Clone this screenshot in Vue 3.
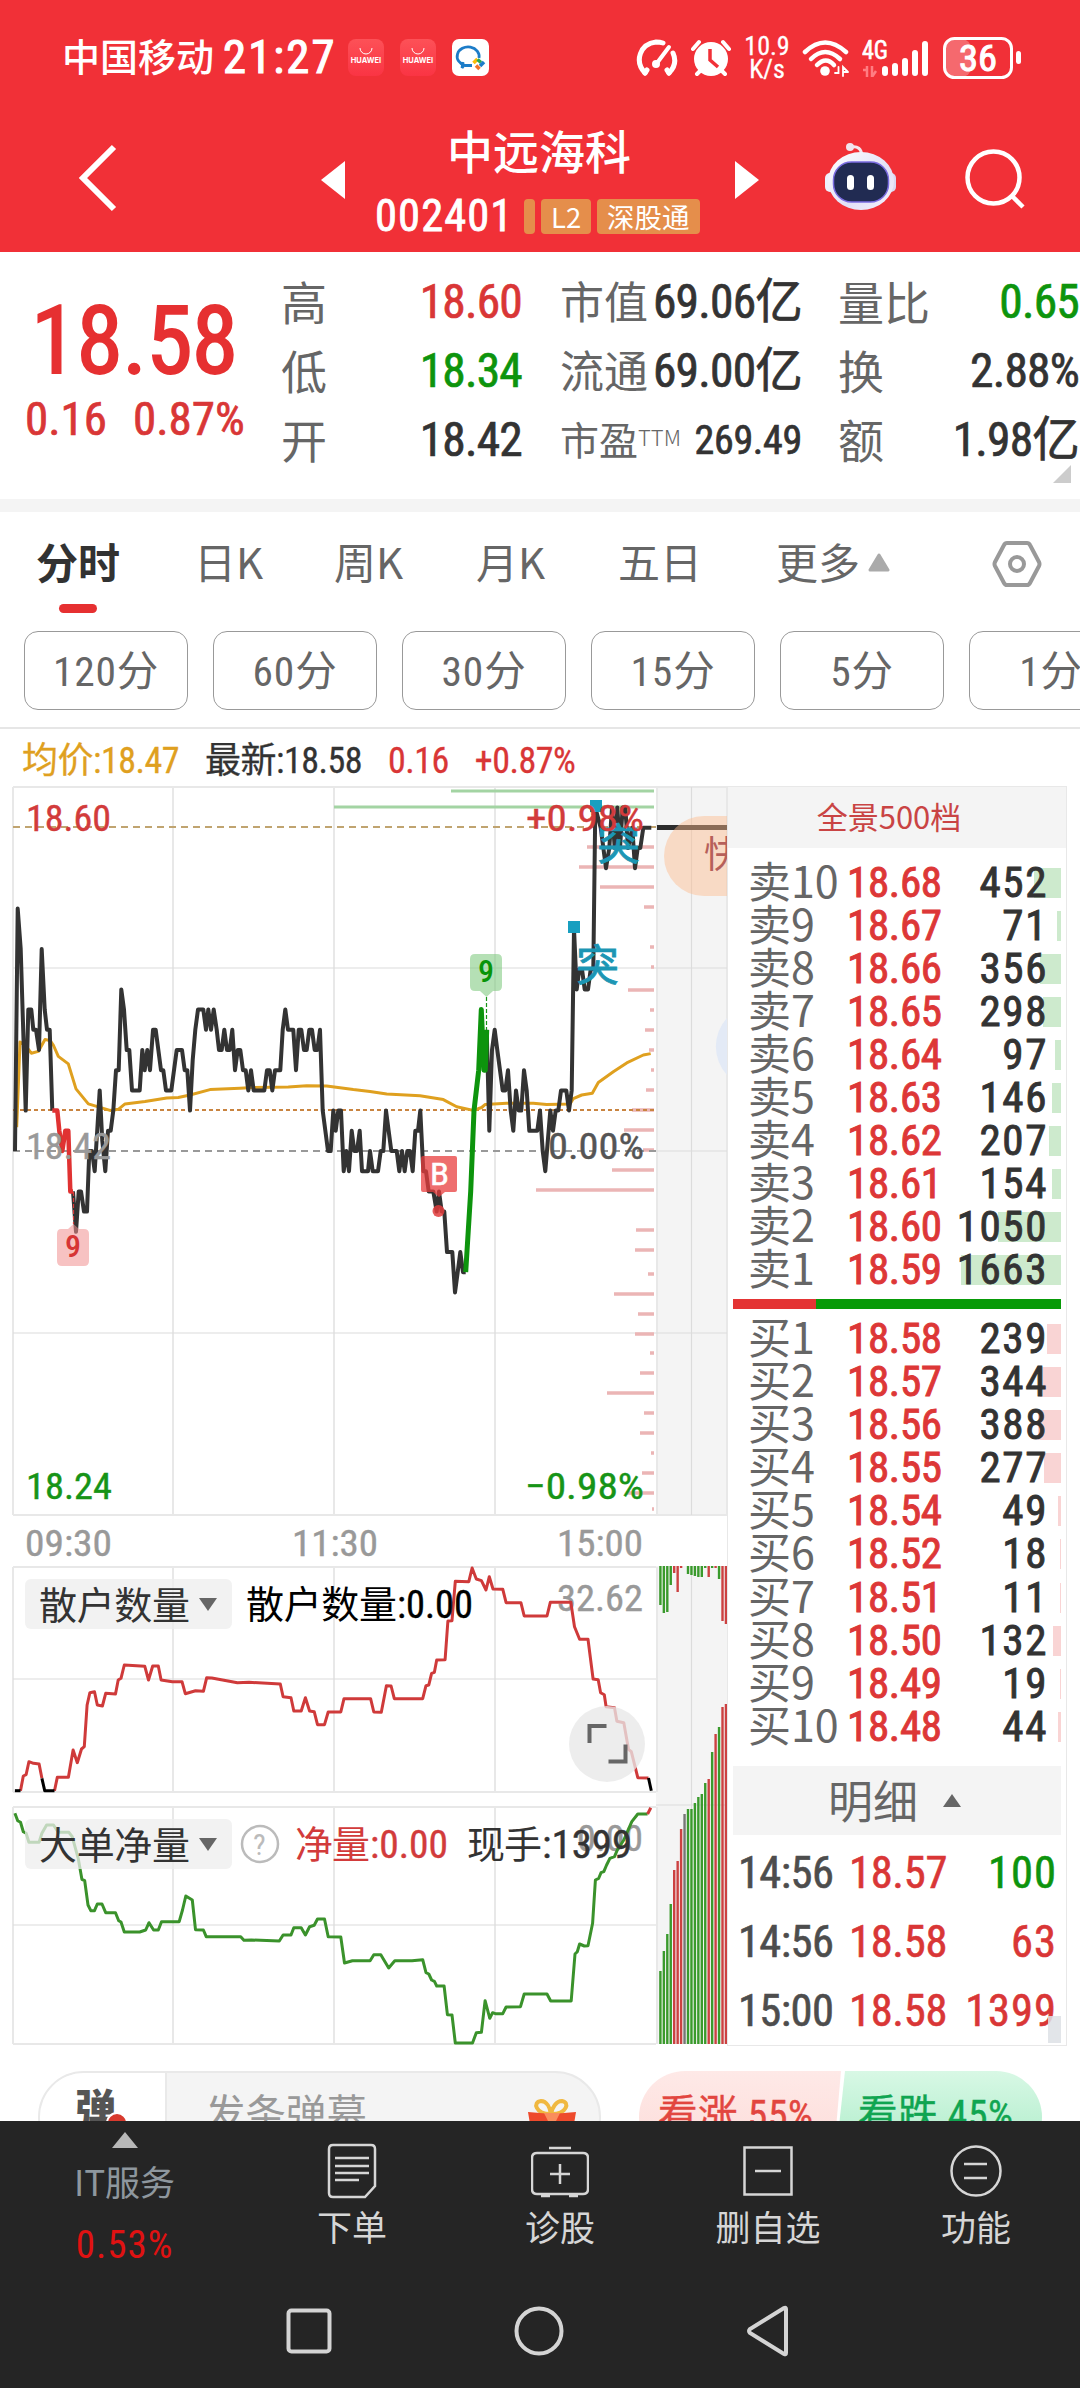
<template>
  <div class="phone">
    <header class="header">
      <div class="status">
        <span class="carrier">中国移动</span>
        <span class="clock">21:27</span>
        <span v-for="n in 2" :key="n" class="store">
          <svg width="36" height="14" viewBox="0 0 36 14"><path d="M12 6a6 6 0 0 0 12 0" fill="none" stroke="#fff" stroke-width="1" /></svg>
          HUAWEI
        </span>
        <svg class="wecom" width="37" height="37" viewBox="0 0 37 37">
          <rect width="37" height="37" rx="7" fill="#fff" />
          <path d="M27 19a11 9.500 0 1 0-14 7.500h7M13 25l-3 4 1-6" fill="none" stroke="#1c7cc8" stroke-width="2.800" />
          <path d="M21.500 24l4-4" stroke="#fbbc05" stroke-width="3.500" />
          <path d="M25.500 20.500l3.500 3" stroke="#2fa84f" stroke-width="3.500" />
          <path d="M28 27l4-4" stroke="#1c7cc8" stroke-width="3.500" />
          <path d="M24 26.500l3.500 3.500" stroke="#f0722a" stroke-width="3.500" />
        </svg>
        <div class="spacer"></div>
        <svg width="42" height="38" viewBox="0 0 42 38" fill="none" stroke="#fff" stroke-width="5" stroke-linecap="round">
          <path d="M9 34C-2 22 4 5 20 3q4 0 7 1" />
          <path d="M37 14q5 11-4 20" />
          <path d="M9 34l2-3M33 34l-2-3" />
          <path d="M21 24L33 8" stroke-width="4" />
          <circle cx="20" cy="25" r="2.500" fill="#fff" stroke-width="3" />
        </svg>
        <svg class="alarm" width="40" height="38" viewBox="0 0 40 38">
          <circle cx="20" cy="20" r="17" fill="#fff" />
          <path d="M2 10l6-7M38 10l-6-7M6 35l5-5M34 35l-5-5" stroke="#fff" stroke-width="4" stroke-linecap="round" />
          <path d="M19 10v11l8 7" fill="none" stroke="#f13037" stroke-width="3.500" />
        </svg>
        <div class="speed"><span>10.9</span><span>K/s</span></div>
        <svg class="wifi" width="48" height="38" viewBox="0 0 48 38" fill="none" stroke="#fff" stroke-width="4.500" stroke-linecap="round">
          <path d="M3 13q20-19 41 0" />
          <path d="M9 20q14-14 29 0" />
          <path d="M15 26q9-9 17 0" />
          <circle cx="23" cy="32" r="4.800" fill="#fff" stroke="none" />
          <path d="M33 33h3.500v-6M45 32h-4v-5M41 36v-9l5 5" stroke-width="1.800" transform="translate(0 1)" />
        </svg>
        <svg class="signal" width="68" height="38" viewBox="0 0 68 38">
          <text x="0" y="20" font-size="25" textLength="26" lengthAdjust="spacingAndGlyphs" fill="#fff" stroke="#fff" stroke-width=".6">4G</text>
          <path d="M1 31h4v-4M5 27v11M10 27v11l4-6" stroke="#ff7d82" stroke-width="2.500" fill="none" />
          <g stroke="#fff" stroke-width="6" stroke-linecap="round">
            <path d="M23 30v4M33 27v7M43 22v12M53 14v20M63 5v29" />
          </g>
        </svg>
        <svg class="battery" width="79" height="42" viewBox="0 0 79 42">
          <rect x="2" y="2" width="26" height="38" rx="9" fill="#f5696e" />
          <rect x="1.500" y="1.500" width="67" height="39" rx="10" fill="none" stroke="#fff" stroke-width="3" />
          <rect x="73" y="14" width="5" height="13" rx="2.500" fill="#fff" />
          <text x="16" y="33.500" font-size="36" fill="#fff" stroke="#fff" stroke-width="1" textLength="38" lengthAdjust="spacingAndGlyphs">36</text>
        </svg>
      </div>

      <div class="nav">
        <svg class="back" width="40" height="68" viewBox="0 0 40 68"><path d="M36 3L5 34l31 31" fill="none" stroke="#fff" stroke-width="6" /></svg>
        <svg class="prev" width="24" height="38" viewBox="0 0 24 38"><path d="M24 0v38L0 19z" fill="#fff" /></svg>
        <div class="stock">
          <div class="stock-name">中远海科</div>
          <div class="stock-line">
            <span class="stock-code">002401</span>
            <i class="tag cut"></i>
            <span class="tag l2">L2</span>
            <span class="tag">深股通</span>
          </div>
        </div>
        <svg class="next" width="24" height="38" viewBox="0 0 24 38"><path d="M0 0v38l24-19z" fill="#fff" /></svg>
        <svg class="robot" width="74" height="70" viewBox="0 0 74 70">
          <defs>
            <linearGradient id="shell" x1="0" y1="0" x2="1" y2="1">
              <stop offset="0" stop-color="#fff" />
              <stop offset=".6" stop-color="#e2e0f6" />
              <stop offset="1" stop-color="#f6f2fd" />
            </linearGradient>
          </defs>
          <path d="M27 5q10-2 11 9" fill="none" stroke="#f4e6ee" stroke-width="3" />
          <circle cx="26" cy="5" r="4" fill="#f1e4ee" />
          <rect x="1" y="31" width="10" height="19" rx="5" fill="#eef0fc" />
          <rect x="62" y="31" width="10" height="19" rx="5" fill="#dbd9f2" />
          <ellipse cx="37" cy="39" rx="33" ry="29" fill="url(#shell)" />
          <rect x="9.500" y="20" width="55" height="40" rx="18" fill="#212b52" stroke="#7a6be0" stroke-width="1.500" />
          <rect x="23" y="33" width="7" height="15" rx="3.500" fill="#fff" />
          <rect x="43" y="33" width="7" height="15" rx="3.500" fill="#fff" />
        </svg>
        <svg class="search" width="60" height="60" viewBox="0 0 60 60" fill="none" stroke="#fff" stroke-width="4.500">
          <circle cx="28.500" cy="28.500" r="26" />
          <path d="M47 47l11 11" />
        </svg>
      </div>
    </header>

    <section class="quote">
      <div class="now red">
        <div class="now-price">18.58</div>
        <div class="now-diff"><span>0.16</span><span>0.87%</span></div>
      </div>
      <dl v-for="(col, i) in quoteCols" :key="i" :class="'col col' + i">
        <div v-for="q in col" :key="q.label" :class="['pair', { small: q.sup }]">
          <dt>{{ q.label }}<sup v-if="q.sup">{{ q.sup }}</sup></dt>
          <dd :class="q.tone">{{ q.value }}</dd>
        </div>
      </dl>
      <i class="corner"></i>
    </section>

    <nav class="tabs">
      <span v-for="t in tabs" :key="t" :class="['tab', { active: t === '分时' }]">{{ t }}</span>
      <span class="tab more">更多<svg width="24" height="20" viewBox="0 0 24 20"><path d="M12 2l9 15H3z" fill="#aaa" stroke="#aaa" stroke-width="3" stroke-linejoin="round" /></svg></span>
      <svg class="gear" width="50" height="48" viewBox="0 0 50 48" fill="none" stroke="#999" stroke-width="4">
        <path d="M15 3h20q2 0 3 2l9 17q1 2 0 4l-9 17q-1 2-3 2H15q-2 0-3-2L3 26q-1-2 0-4l9-17q1-2 3-2z" />
        <circle cx="25" cy="24" r="7" />
      </svg>
    </nav>

    <div class="periods">
      <span v-for="p in periods" :key="p" class="period">{{ p }}</span>
    </div>

    <div class="summary">
      <span class="gold">均价:18.47</span>
      <span>最新:18.58</span>
      <span class="red">0.16</span>
      <span class="red">+0.87%</span>
    </div>

    <main class="board">
      <svg class="chart" width="716" height="1260" viewBox="12 786 716 1260">
        <!-- side strip -->
        <g fill="#f4f4f4">
          <rect x="656" y="787" width="71" height="728" />
          <rect x="656" y="1566" width="71" height="478" />
        </g>
        <!-- grid -->
        <g stroke="#e8e8e8" stroke-width="2" fill="none">
          <path d="M13 787H727M13 1515H727V787M13 1567H656M13 1792H656M13 1807H656M656 1805H727M13 2044H656" />
          <path v-for="x in [13, 173, 334, 495, 657]" :key="x" :d="`M${x} 787V1515M${x} 1567V1792M${x} 1807V2044`" />
        </g>
        <path d="M13 968H727M13 1333H727M656 1151H727M13 1679H656M13 1925H656M691.500 787V1515M691.500 1566V2044" stroke="#dcdcdc" stroke-width="1.200" fill="none" />

        <!-- chip distribution -->
        <path d="M451 791H654M334 807H654" stroke="#a3d4a3" stroke-width="3" />
        <path v-for="[x, y] in chips" :key="y" :d="`M${x} ${y}H654`" stroke="#ebb5b5" stroke-width="3.500" />

        <g fill="none" stroke-width="2">
          <path d="M13 827H656" stroke="#c0a470" stroke-dasharray="7 5" />
          <path d="M13 1151H656" stroke="#999" stroke-dasharray="7 5" />
          <path d="M13 1110H656" stroke="#c98440" stroke-dasharray="4 3" />
        </g>

        <g fill="none" stroke-linejoin="round">
          <polyline :points="average" stroke="#dfa01f" stroke-width="3" />
          <polyline v-for="(s, i) in price" :key="i" :points="s.points" :stroke="s.color" :stroke-width="s.width" />
          <path d="M657 827.500H727" stroke="#2c2c2c" stroke-width="5" />
          <path d="M73.500 1192V1224" stroke="#d43a3a" stroke-width="1.200" stroke-dasharray="4 2" />
          <path d="M486.500 997V1030" stroke="#179417" stroke-width="1.200" stroke-dasharray="4 2" />
        </g>

        <!-- signals -->
        <path d="M61 1229h7l5.500-5 5.500 5h5q5 0 5 5v27q0 5-5 5H62q-5 0-5-5v-27q0-5 4-5z" fill="#f08f8f" fill-opacity=".55" />
        <text x="65" y="1257" class="mark" fill="#d63535">9</text>
        <path d="M475 954h22q5 0 5 5v27q0 5-5 5h-4l-6.500 6-6.500-6h-5q-5 0-5-5v-27q0-5 5-5z" fill="#7cc87c" fill-opacity=".57" />
        <text x="478" y="982" class="mark" fill="#089408">9</text>
        <circle cx="438.500" cy="1211" r="6" fill="#e23c3c" fill-opacity=".85" />
        <path d="M423 1156h32q2 0 2 2v32q0 2-2 2h-10l-6 5-6-5h-10q-2 0-2-2v-32q0-2 2-2z" fill="#e83d3d" fill-opacity=".75" />
        <text x="430" y="1185" font-size="31" textLength="19" lengthAdjust="spacingAndGlyphs" fill="#fff" stroke="#fff" stroke-width=".5">B</text>
        <rect x="568" y="921" width="12" height="12" fill="#189fc0" />
        <rect x="590" y="800" width="12" height="12" fill="#189fc0" />
        <text x="576" y="981" class="burst">突</text>
        <text x="597" y="860" class="burst">突</text>

        <path d="M727 816h-23a40 40 0 0 0 0 80h23z" fill="#fdba8c" fill-opacity=".45" />
        <text x="704" y="868" font-size="37" fill="#b6605a">快</text>
        <path d="M727 1018a42 42 0 0 0 0 57z" fill="#e3eaf6" />

        <g class="axis">
          <text v-for="a in axis" :key="a.text + a.y" :x="a.x" :y="a.y" :textLength="a.w" lengthAdjust="spacingAndGlyphs" :fill="a.fill" :stroke="a.fill">{{ a.text }}</text>
        </g>

        <!-- indicators -->
        <g fill="none" stroke-width="3" stroke-linejoin="round">
          <polyline v-for="(s, i) in retail" :key="i" :points="s.points" :stroke="s.color" />
          <polyline v-for="(s, i) in netFlow" :key="'n' + i" :points="s.points" :stroke="s.color" />
        </g>
        <g v-for="(b, i) in strip" :key="i" :fill="b.color">
          <rect :x="659.2 + i * 3.45" y="1566" width="2.400" :height="b.top" />
          <rect :x="659.2 + i * 3.45" :y="2044 - b.bottom" width="2.400" :height="b.bottom" />
        </g>

        <g class="legend">
          <rect x="25" y="1579" width="207" height="50" rx="6" fill="#ededed" fill-opacity=".75" />
          <text x="39" y="1619" textLength="151" fill="#333">散户数量</text>
          <path d="M199 1598h18l-9 13z" fill="#666" />
          <text x="246" y="1618" textLength="151" fill="#000">散户数量</text>
          <text x="397" y="1618" textLength="76" fill="#000" stroke="#000" lengthAdjust="spacingAndGlyphs">:0.00</text>

          <rect x="25" y="1819" width="207" height="50" rx="6" fill="#ededed" fill-opacity=".75" />
          <text x="39" y="1859" textLength="151" fill="#333">大单净量</text>
          <path d="M199 1838h18l-9 13z" fill="#666" />
          <circle cx="260" cy="1844" r="18" fill="none" stroke="#bbb" stroke-width="2.500" />
          <text x="253" y="1855" class="ask">?</text>
          <text x="295" y="1858" textLength="75" fill="#d23b3b">净量</text>
          <text x="370" y="1858" textLength="78" fill="#d23b3b" stroke="#d23b3b" lengthAdjust="spacingAndGlyphs">:0.00</text>
          <text x="467" y="1858" textLength="75" fill="#333">现手</text>
          <text x="542" y="1858" textLength="90" fill="#333" stroke="#333" lengthAdjust="spacingAndGlyphs">:1399</text>
        </g>

        <circle cx="607" cy="1744" r="38" fill="#e8e8e8" fill-opacity=".78" />
        <path d="M589.500 1743v-17h17M608.500 1761.500h17v-17" fill="none" stroke="#666" stroke-width="4" />
      </svg>

      <aside class="book">
        <div class="book-head">全景500档</div>
        <div class="levels asks">
          <div v-for="(r, i) in asks" :key="i" class="level">
            <span class="lv-name">卖{{ 10 - i }}</span>
            <span class="lv-price">{{ r[0] }}</span>
            <span class="lv-vol">{{ r[1] }}</span>
            <i class="lv-bar" :style="{ width: r[1] * 0.06 + 'px' }"></i>
          </div>
        </div>
        <div class="ratio"><i></i></div>
        <div class="levels bids">
          <div v-for="(r, i) in bids" :key="i" class="level">
            <span class="lv-name">买{{ i + 1 }}</span>
            <span class="lv-price">{{ r[0] }}</span>
            <span class="lv-vol">{{ r[1] }}</span>
            <i class="lv-bar" :style="{ width: r[1] * 0.06 + 'px' }"></i>
          </div>
        </div>
        <div class="detail-head"><span>明细</span><svg width="18" height="13" viewBox="0 0 18 13"><path d="M9 0l9 13H0z" fill="#666" /></svg></div>
        <div v-for="(d, i) in deals" :key="i" class="deal">
          <span class="deal-time">{{ d.time }}</span>
          <span class="deal-price">{{ d.price }}</span>
          <span :class="['deal-vol', d.tone]">{{ d.vol }}</span>
        </div>
        <i class="thumb"></i>
      </aside>
    </main>

    <div class="social">
      <div class="danmu">
        <div class="danmu-icon">弹<i></i></div>
        <span class="danmu-input">发条弹幕</span>
        <svg width="52" height="48" viewBox="0 0 48 48">
          <path d="M22 16C8 16 4 4 13 3c6 0 9 7 10 13 1-6 5-13 11-13 8 1 5 13-10 13" fill="none" stroke="#f0b840" stroke-width="4" />
          <path d="M0 14l24 2 24-2-2 12-22 3-22-3z" fill="#ee4a2c" />
          <path d="M3 26l21 3 21-3v18H3z" fill="#d92b1c" />
          <path d="M16 15h16l-4 8h-8z" fill="#fa8d5c" />
        </svg>
      </div>
      <div class="vote">
        <span class="up">看涨 55%</span>
        <span class="down">看跌 45%</span>
      </div>
    </div>

    <footer class="footer">
      <div class="actions">
        <div class="sector">
          <svg width="26" height="16" viewBox="0 0 26 16"><path d="M13 0l13 16H0z" fill="#b8b8b8" /></svg>
          <span>IT服务</span>
          <b>0.53%</b>
        </div>
        <div class="action">
          <svg width="50" height="56" viewBox="0 0 50 56"><path d="M6 2h38q4 0 4 4v37L38 54H6q-4 0-4-4V6q0-4 4-4zM8 15h34M8 23h34M8 30h34M8 37h24" /></svg>
          <span>下单</span>
        </div>
        <div class="action">
          <svg width="58" height="56" viewBox="0 0 58 56"><path d="M6 10h46q5 0 5 5v31q0 5-5 5H6q-5 0-5-5V15q0-5 5-5zM18 5h22M29 21v20M19 31h20M10 53h9M38 53h9" /></svg>
          <span>诊股</span>
        </div>
        <div class="action">
          <svg width="50" height="56" viewBox="0 0 50 56"><path d="M1.500 4.500h47v47h-47zM12 28h26" /></svg>
          <span>删自选</span>
        </div>
        <div class="action">
          <svg width="52" height="56" viewBox="0 0 52 56"><path d="M14 21h23M14 35h23" /><circle cx="26" cy="28" r="24.500" /></svg>
          <span>功能</span>
        </div>
      </div>
      <div class="system">
        <svg width="46" height="50" viewBox="0 0 46 50"><rect x="2.500" y="4.500" width="41" height="41" rx="3" /></svg>
        <svg width="50" height="50" viewBox="0 0 50 50"><circle cx="25" cy="25" r="22.500" /></svg>
        <svg width="44" height="52" viewBox="0 0 44 52"><path d="M40 4v44q0 2-2 1L4 28q-2-2 0-4L38 3q2-1 2 1z" /></svg>
      </div>
    </footer>
  </div>
</template>

<script setup>
const quoteCols = [
  [
    { label: '高', value: '18.60', tone: 'red' },
    { label: '低', value: '18.34', tone: 'green' },
    { label: '开', value: '18.42' }
  ],
  [
    { label: '市值', value: '69.06亿' },
    { label: '流通', value: '69.00亿' },
    { label: '市盈', sup: 'TTM', value: '269.49' }
  ],
  [
    { label: '量比', value: '0.65', tone: 'green' },
    { label: '换', value: '2.88%' },
    { label: '额', value: '1.98亿' }
  ]
];

const tabs = ['分时', '日K', '周K', '月K', '五日'];
const periods = ['120分', '60分', '30分', '15分', '5分', '1分'];

const asks = [
  ['18.68', 452], ['18.67', 71], ['18.66', 356], ['18.65', 298], ['18.64', 97],
  ['18.63', 146], ['18.62', 207], ['18.61', 154], ['18.60', 1050], ['18.59', 1663]
];
const bids = [
  ['18.58', 239], ['18.57', 344], ['18.56', 388], ['18.55', 277], ['18.54', 49],
  ['18.52', 18], ['18.51', 11], ['18.50', 132], ['18.49', 19], ['18.48', 44]
];
const deals = [
  { time: '14:56', price: '18.57', vol: 100, tone: 'green' },
  { time: '14:56', price: '18.58', vol: 63, tone: 'red' },
  { time: '15:00', price: '18.58', vol: 1399, tone: 'red' }
];

const axis = [
  { text: '18.60', x: 26, y: 831, w: 85, fill: '#d23b3b' },
  { text: '+0.98%', x: 526, y: 831, w: 118, fill: '#d23b3b' },
  { text: '18.42', x: 26, y: 1159, w: 85, fill: '#999' },
  { text: '0.00%', x: 548, y: 1159, w: 96, fill: '#555' },
  { text: '18.24', x: 26, y: 1499, w: 86, fill: '#179417' },
  { text: '−0.98%', x: 525, y: 1499, w: 119, fill: '#179417' },
  { text: '09:30', x: 25, y: 1556, w: 87, fill: '#999' },
  { text: '11:30', x: 292, y: 1556, w: 86, fill: '#999' },
  { text: '15:00', x: 557, y: 1556, w: 86, fill: '#999' },
  { text: '32.62', x: 557, y: 1611, w: 86, fill: '#999' },
  { text: '0.00', x: 577, y: 1851, w: 66, fill: '#999' }
];

// left end and height of every pink distribution bar
const chips = [
  [587, 847], [579, 867], [600, 887], [644, 907], [650, 947], [651, 967], [628, 990], [650, 1010],
  [645, 1030], [649, 1050], [651, 1070], [646, 1090], [632, 1110], [624, 1130], [643, 1150], [612, 1170],
  [536, 1190], [636, 1230], [635, 1250], [648, 1274], [614, 1294], [638, 1314], [635, 1334], [650, 1353],
  [640, 1373], [607, 1393], [644, 1413], [640, 1433], [651, 1453], [642, 1473], [626, 1493], [652, 1509]
];

const parse = (text) => text.trim().split(/\s+/).map((p) => p.split(',').map(Number));

// one tick is 0.01, counted from the previous close
const ticks = (text) => parse(text).map(([x, n]) => `${(x / 3).toFixed(1)},${(1151 - n * 20.2).toFixed(1)}`).join(' ');

const price = [
  {
    color: '#333', width: 4,
    points: ticks(`45,0 53,12 62,10 77,2 85,7 94,7 100,6 108,6 117,5 125,10 134,7 141,6 149,6 157,2`)
  },
  {
    color: '#333', width: 4,
    points: ticks(`219,-2 228,-4 236,-2 243,-2 252,-3 261,-3 268,0 276,0 284,-1 299,3 307,.5 316,-1 324,1 332,1 340,2
      348,4 356,4 364,8 372,7 380,5 388,5 396,3 419,3 427,5 434,4 442,5 450,4 459,6 467,6 483,4 490,4 498,3 514,3
      530,5 546,5 554,4 562,4 570,2 578,4.5 586,6 594,7 610,7 618,6 625,7 633,6 641,7 650,6 657,5 665,5 673,6 681,5
      689,5 697,6 705,4 713,5 721,5 729,4 737,4 745,3 753,4 761,3 793,3 801,4 809,4 817,3 825,4 841,4 848,6 856,7
      864,6 880,6 888,4 896,6 904,6 912,5 920,5 928,6 936,6 944,5 952,5 960,6 968,2 984,0 992,0 1000,2 1007,1
      1015,2 1023,2 1031,-1 1039,0 1047,-1 1055,1 1063,0 1071,0 1079,1 1086,-1
      1104,-1 1110,0 1118,-1 1134,-1 1142,0 1150,0 1158,2 1174,0 1190,0 1198,-1 1206,0 1214,-1 1222,0 1230,0
      1238,-1 1246,1 1254,1 1261,2 1270,-1 1278,-1 1286,-2 1300,-2 1310,-3 1317,-2 1325,-3 1333,-3 1341,-5
      1357,-5 1365,-7 1373,-6 1381,-5 1389,-6 1397,-6`)
  },
  {
    color: '#333', width: 4,
    points: ticks(`1460,6 1468,1 1476,5 1484,6 1492,5 1508,3 1516,3 1524,4 1532,2 1540,1 1548,3 1556,2 1564,2 1572,4
      1580,3 1588,1 1612,1 1620,2 1628,0 1636,-1 1651,2 1659,1 1667,2 1675,2 1683,3 1699,3 1707,2 1715,3 1722,11
      1730,8 1738,9 1746,9 1754,8 1764,8 1772,9 1780,9 1786,17 1802,16 1818,14 1828,15 1836,17 1844,15 1852,17
      1860,15 1868,17 1876,17 1884,15 1897,16 1905,14 1913,15 1921,15 1930,16 1954,16`)
  },
  { color: '#e03232', width: 4.5, points: ticks('157,2 172,2 178,1 187,0 196,1 205,1 211,-2 219,-2') },
  { color: '#0d940d', width: 5, points: ticks('1397,-6 1412,-2 1422,2 1436,4 1444,7 1452,4 1456,4 1460,6') }
];

const average = parse(`50,1000 60,762 75,770 94,793 115,788 135,755 150,757 160,770 175,802 205,823 228,893 265,935
  290,942 330,953 355,950 375,935 435,928 500,918 535,917 570,910 630,895 720,891 760,889 865,888 920,884 980,885
  1060,895 1110,900 1160,907 1260,912 1330,923 1370,943 1420,953 1445,945 1455,937 1520,933 1600,933 1640,937
  1710,935 1720,920 1745,910 1777,905 1795,875 1840,845 1880,820 1930,798 1952,794`)
  .map(([x, y]) => `${(x / 3).toFixed(1)},${(770 + y / 2.8).toFixed(1)}`).join(' ');

const sub = (text) => parse(text).map(([x, y]) => `${(x / 2.148).toFixed(1)},${(1550 + y / 3).toFixed(1)}`).join(' ');

const retail = [
  {
    color: '#cf3a3a',
    points: sub(`44,722 50,678 56,674 62,635 72,640 84,642 90,685`)
  },
  {
    color: '#cf3a3a',
    points: sub(`117,722 123,682 147,682 157,600 166,638 175,597 181,590 187,465 193,428 203,425 209,465 220,468
      227,430 248,432 254,390 260,385 267,345 311,349 319,390 328,348 340,348 346,390 370,395 391,395 398,431
      420,422 437,424 444,383 455,384 510,398 535,397 602,402 608,440 625,443 631,483 647,483 656,443 665,483
      675,485 682,524 697,524 705,486 732,486 739,446 796,446 803,486 819,487 830,407 840,408 847,446 908,446
      915,407 921,405 927,370 933,367 938,330 956,329 962,213 971,212 978,94 1007,95 1014,54 1023,87 1034,92
      1044,120 1051,80 1059,117 1080,118 1087,158 1119,158 1126,198 1175,198 1182,157 1226,157 1234,230 1245,268
      1263,268 1274,387 1285,389 1290,428 1298,434 1302,470 1320,473 1325,514 1340,518 1350,598 1356,605 1370,683
      1393,684`)
  },
  { color: '#000', points: sub('32,722 44,722') },
  { color: '#000', points: sub('90,685 96,722 117,722') },
  { color: '#000', points: sub('1393,684 1399,722') }
];

const netFlow = [
  {
    color: '#3a922b',
    points: sub(`32,790 38,812 44,817 50,845 56,850 62,877 84,877 90,850 100,825 115,825 125,847 148,847 155,860
      168,925 176,988 182,992 189,1065 195,1082 203,1082 209,1062 219,1062 227,1088 248,1088 255,1112 260,1116
      267,1146 300,1146 313,1140 320,1118 330,1140 340,1140 347,1115 385,1115 392,1080 399,1038 413,1050 420,1139
      437,1140 443,1160 517,1160 524,1171 540,1170 600,1173 608,1155 625,1155 631,1133 647,1133 656,1155 665,1130
      675,1126 682,1107 697,1107 705,1160 732,1161 740,1239 757,1232 795,1232 803,1214 818,1214 835,1254 848,1232
      885,1232 908,1229 915,1268 921,1272 927,1290 933,1294 938,1308 954,1308 961,1394 971,1395 978,1479 1015,1479
      1023,1448 1034,1447 1042,1352 1052,1405 1058,1388 1064,1391 1080,1391 1087,1371 1118,1370 1126,1332
      1175,1332 1183,1353 1227,1353 1235,1212 1240,1205 1245,1182 1255,1188 1263,1187 1273,1120 1279,990 1286,985
      1291,968 1297,965 1303,945 1310,925 1320,920 1326,900 1340,870 1357,815 1370,792 1391,792`)
  },
  { color: '#cf3a3a', points: sub('1391,792 1398,773') }
];

const stripColors = { g: '#3a9a2c', r: '#cc4141', k: '#777' };
const strip = [
  ['g', 39, 73], ['g', 47, 93], ['g', 46, 110], ['g', 19, 140], ['r', 7, 174], ['r', 26, 183], ['r', 2, 215],
  ['k', 0, 230], ['g', 8, 235], ['g', 9, 235], ['g', 10, 241], ['g', 11, 247], ['g', 11, 250], ['g', 2, 261],
  ['r', 11, 265], ['g', 2, 292], ['r', 2, 310], ['g', 13, 317], ['r', 55, 337], ['r', 58, 340]
].map(([c, top, bottom]) => ({ color: stripColors[c], top, bottom }));
</script>

<style>
body {
  margin: 0;
  background: #fff;
}
</style>

<style scoped>
.phone {
  width: 1080px;
  height: 2388px;
  overflow: hidden;
  display: flex;
  flex-direction: column;
  background: #fff;
  color: #333;
  font-family: 'Roboto Condensed', 'Noto Sans CJK SC', sans-serif;
  line-height: 1;
  white-space: nowrap;
}

.phone svg {
  flex: none;
  display: block;
}

i {
  font-style: normal;
}

.red {
  color: #d93636;
}

.green {
  color: #0d940d;
}

.gold {
  color: #dfa01f;
}

/* header */
.header {
  flex: none;
  height: 252px;
  background: #f13037;
  color: #fff;
}

.status {
  display: flex;
  align-items: center;
  height: 115px;
  padding: 0 58px 0 62px;
}

.carrier {
  width: 161px;
  font-size: 38px;
  font-weight: 500;
}

.clock {
  width: 125px;
  font-size: 46.5px;
  letter-spacing: 2.2px;
  -webkit-text-stroke: 1.2px currentColor;
}

.store {
  width: 36px;
  height: 37px;
  margin-right: 16px;
  border-radius: 8px;
  background: linear-gradient(#fd5157, #fa3444);
  font: 700 7.500px/8px 'Inter', sans-serif;
  text-align: center;
}

.store svg {
  margin: 3px 0 1px;
}

.spacer {
  flex: 1;
}

.alarm {
  margin-left: 13px;
}

.speed {
  width: 46px;
  margin: 0 12px 0 13px;
  display: flex;
  flex-direction: column;
  align-items: center;
  font-size: 26px;
  line-height: 23px;
  -webkit-text-stroke: .3px currentColor;
}

.signal {
  margin-left: 12px;
}

.battery {
  margin-left: 13px;
}

.nav {
  position: relative;
  display: flex;
  align-items: flex-start;
  height: 137px;
}

.back {
  margin: 29px 203px 0 78px;
}

.prev {
  margin-top: 46px;
}

.stock {
  width: 390px;
}

.stock-name {
  padding: 15px 0 0 102px;
  font-size: 46px;
  font-weight: 500;
  line-height: 46px;
}

.stock-line {
  display: flex;
  align-items: center;
  height: 36px;
  margin-top: 22px;
  padding-left: 30px;
}

.stock-code {
  width: 149px;
  font-size: 44.5px;
  letter-spacing: 1.1px;
  -webkit-text-stroke: .8px currentColor;
}

.tag {
  box-sizing: border-box;
  height: 35px;
  padding: 0 10px;
  border-radius: 4px;
  background: #e58e4b;
  font: 400 27.5px/34px 'Noto Sans CJK SC', sans-serif;
}

.tag.cut {
  width: 11px;
  padding: 0;
  margin-right: 6px;
}

.tag.l2 {
  width: 50px;
  margin-right: 6px;
}

.next {
  margin-top: 46px;
}

.robot {
  margin: 27px 67px 0 65px;
}

.search {
  margin-top: 34px;
}

/* quote */
.quote {
  position: relative;
  flex: none;
  box-sizing: border-box;
  display: flex;
  height: 260px;
  padding-top: 16px;
  border-bottom: 13px solid #f4f4f4;
}

.now {
  width: 281px;
}

.now-price {
  padding: 25px 0 0 31px;
  font-size: 94px;
  line-height: 96px;
  letter-spacing: -.8px;
  color: #e63031;
  -webkit-text-stroke: 1.8px currentColor;
}

.now-diff {
  display: flex;
  padding-left: 25px;
  font-size: 47px;
  line-height: 60px;
  -webkit-text-stroke: .7px currentColor;
}

.now-diff span:first-child {
  width: 108px;
}

.col {
  margin: 0;
}

.col0 {
  width: 241px;
}

.col1 {
  width: 242px;
  margin-left: 38px;
}

.col2 {
  width: 241px;
  margin-left: 36px;
}

.pair {
  display: flex;
  justify-content: space-between;
  align-items: center;
  height: 69px;
}

dt {
  padding-top: 3px;
  color: #666;
  font-size: 46px;
}

.col1 dt {
  font-size: 44px;
}

dd {
  margin: 0;
  font-size: 47.5px;
  letter-spacing: -.8px;
  -webkit-text-stroke: .7px currentColor;
}

.pair.small dt {
  display: flex;
  font-size: 39px;
}

.pair.small sup {
  font: 300 22px/26px 'Noto Sans CJK SC', sans-serif;
}

.pair.small dd {
  font-size: 40px;
  letter-spacing: -.3px;
}

.corner {
  position: absolute;
  left: 1053px;
  top: 213px;
  border: 9px solid #ccc;
  border-top-color: transparent;
  border-left-color: transparent;
}

/* tabs */
.tabs {
  flex: none;
  display: flex;
  align-items: center;
  height: 103px;
  padding-left: 36px;
  color: #666;
  font: 400 42px/60px 'Noto Sans CJK SC', sans-serif;
}

.tab {
  position: relative;
  width: 142px;
  margin-top: -6px;
}

.tab:first-child {
  width: 158px;
}

.tab:nth-child(2) {
  width: 140px;
}

.tab.active {
  color: #323232;
  font-weight: 700;
}

.tab.active::after {
  content: '';
  position: absolute;
  left: 23px;
  bottom: -22px;
  width: 38px;
  height: 9px;
  border-radius: 5px;
  background: #e63031;
}

.tab.more {
  display: flex;
  align-items: center;
  gap: 7px;
  width: 215px;
  margin-left: 16px;
}

.more svg {
  margin-top: 4px;
}

.gear {
  margin-left: 1px;
}

.periods {
  flex: none;
  display: flex;
  gap: 25px;
  height: 96px;
  padding: 16px 0 0 24px;
  border-bottom: 2px solid #e6e6e6;
}

.period {
  flex: none;
  box-sizing: border-box;
  width: 164px;
  height: 79px;
  border: 1.5px solid #999;
  border-radius: 14px;
  color: #666;
  font-size: 41.5px;
  line-height: 79px;
  letter-spacing: .8px;
  text-align: center;
}

.summary {
  flex: none;
  display: flex;
  gap: 26px;
  height: 57px;
  padding: 0 0 0 22px;
  font-size: 36px;
  line-height: 64px;
  letter-spacing: -.5px;
  -webkit-text-stroke: .3px currentColor;
}

/* chart and order book */
.board {
  flex: none;
  display: flex;
  height: 1260px;
  padding-left: 12px;
}

.chart text {
  font-family: 'Roboto Condensed', 'Noto Sans CJK SC', sans-serif;
}

.chart .axis text {
  font-size: 37.5px;
  stroke-width: .4px;
}

.chart .mark {
  font-size: 32px;
  stroke: currentColor;
  stroke-width: 0;
  font-weight: 500;
}

.chart .burst {
  font-size: 43px;
  fill: #1c96b4;
  stroke: #1c96b4;
  stroke-width: .8px;
}

.chart .legend text {
  font-size: 38px;
  stroke-width: .4px;
}

.chart .legend .ask {
  font-size: 30px;
  fill: #bbb;
}

.book {
  position: relative;
  box-sizing: border-box;
  width: 340px;
  margin-left: -1px;
  border: 1px solid #e8e8e8;
  background: #fff;
}

.book-head {
  height: 61px;
  background: #f4f4f4;
  color: #c94444;
  font: 400 31px/58px 'Noto Sans CJK SC', sans-serif;
  text-align: center;
  text-indent: -16px;
}

.levels {
  padding: 13px 5px 0 20px;
}

.level {
  position: relative;
  display: flex;
  align-items: center;
  height: 43.04px;
}

.lv-name {
  width: 99px;
  margin-top: -6px;
  color: #666;
  font: 400 43px/43px 'Noto Sans CJK SC', sans-serif;
}

.lv-price {
  color: #dd3737;
  font-size: 43px;
  letter-spacing: -.3px;
  -webkit-text-stroke: .9px currentColor;
}

.lv-vol {
  z-index: 1;
  flex: 1;
  margin-right: 13px;
  font-size: 43px;
  letter-spacing: 1.6px;
  text-align: right;
  -webkit-text-stroke: .9px currentColor;
}

.lv-bar {
  position: absolute;
  right: 0;
  top: 7px;
  height: 30px;
  background: #cdeacd;
}

.bids .lv-bar {
  background: #f9d4d4;
}

.ratio {
  height: 10px;
  margin: 8px 5px 0;
  background: #089a08;
}

.ratio i {
  display: block;
  width: 83px;
  height: 10px;
  background: #e43434;
}

.bids {
  padding-top: 8px;
}

.detail-head {
  box-sizing: border-box;
  display: flex;
  align-items: center;
  gap: 25px;
  height: 69px;
  margin: 18px 5px 4px;
  padding-left: 95px;
  background: #f4f4f4;
  color: #666;
  font-size: 45px;
}

.detail-head span {
  padding-top: 7px;
}

.deal {
  display: flex;
  align-items: center;
  height: 69px;
  padding: 0 9px 0 10px;
  font-size: 44.5px;
  -webkit-text-stroke: .6px currentColor;
}

.deal-time {
  width: 111px;
  color: #4d4d4d;
  letter-spacing: -.6px;
}

.deal-price {
  color: #d93636;
  letter-spacing: -.3px;
}

.deal-vol {
  flex: 1;
  letter-spacing: 1px;
  text-align: right;
}

.thumb {
  position: absolute;
  right: 5px;
  bottom: 2px;
  width: 13px;
  height: 27px;
  background: #dde1e5;
  opacity: .85;
}

/* danmu and vote */
.social {
  flex: none;
  box-sizing: border-box;
  display: flex;
  height: 75px;
  padding: 25px 38px 0;
  overflow: hidden;
}

.danmu {
  box-sizing: border-box;
  display: flex;
  width: 563px;
  height: 92px;
  overflow: hidden;
  border: 2px solid #e9e9e9;
  border-radius: 46px;
  background: #f4f4f4;
}

.danmu-icon {
  position: relative;
  box-sizing: border-box;
  width: 127px;
  padding: 17px 0 0 35px;
  border-right: 2px solid #e9e9e9;
  background: #fff;
  color: #555;
  font-size: 41px;
  font-weight: 900;
}

.danmu-icon i {
  position: absolute;
  left: 66px;
  top: 39px;
  width: 18px;
  height: 18px;
  border: 2px solid #fff;
  border-radius: 50%;
  background: #d83a2e;
}

.danmu-input {
  flex: 1;
  padding: 22px 0 0 38px;
  color: #999;
  font-size: 40.5px;
}

.danmu svg {
  margin: 25px 21px 0 0;
}

.vote {
  display: flex;
  width: 403px;
  height: 92px;
  margin-left: 38px;
  border-radius: 46px;
  overflow: hidden;
  font-size: 39.5px;
  line-height: 88px;
  letter-spacing: .6px;
  -webkit-text-stroke: .4px currentColor;
}

.vote span {
  box-sizing: border-box;
}

.up {
  width: 204px;
  padding-left: 19px;
  background: linear-gradient(#fee9e7, #fddbd8);
  color: #e2463f;
  clip-path: polygon(0 0, 100% 0, 194px 100%, 0 100%);
}

.down {
  width: 209px;
  margin-left: -6px;
  padding-left: 23px;
  background: linear-gradient(#d8f8e5, #a8ebc6);
  color: #10a551;
  clip-path: polygon(10px 0, 100% 0, 100% 100%, 0 100%);
}

/* footer */
.footer {
  flex: none;
  height: 267px;
  background: #252525;
  color: #d6d6d6;
}

.actions {
  display: flex;
  height: 157px;
  padding-left: 21px;
}

.sector {
  flex: none;
  display: flex;
  flex-direction: column;
  align-items: center;
  width: 207px;
  margin-right: 20px;
  font-size: 36px;
}

.sector svg {
  margin: 11px 0 14px;
}

.sector span {
  color: #8e979e;
  font: 400 35px/38px 'Noto Sans CJK SC', sans-serif;
}

.sector b {
  margin-top: 26px;
  color: #e01212;
  font-weight: 400;
  font-size: 39px;
  letter-spacing: 1px;
}

.action {
  flex: none;
  display: flex;
  flex-direction: column;
  align-items: center;
  width: 208px;
  padding-top: 22px;
  font-size: 35px;
}

.action svg {
  margin-bottom: 13px;
  fill: none;
  stroke: #d6d6d6;
  stroke-width: 2.5;
}

.system {
  display: flex;
  align-items: center;
  justify-content: space-between;
  height: 106px;
  padding: 0 290px 0 286px;
}

.system svg {
  fill: none;
  stroke: #d4d4d4;
  stroke-width: 4;
}
</style>
